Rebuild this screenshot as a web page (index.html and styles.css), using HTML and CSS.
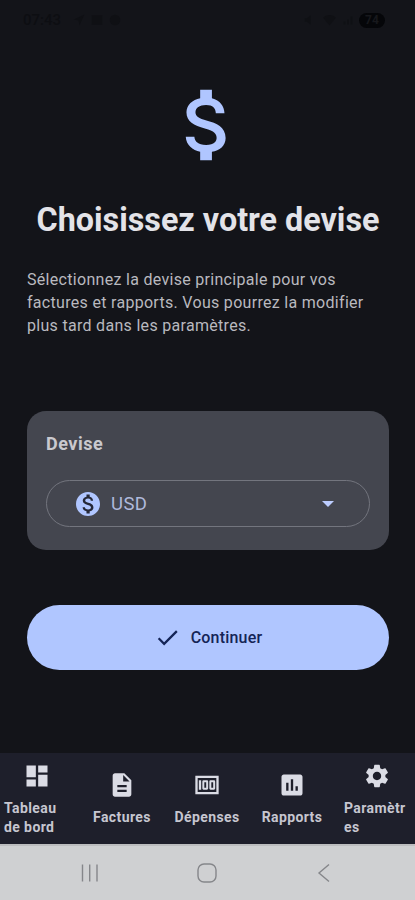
FILE: index.html
```html
<!DOCTYPE html>
<html lang="fr">

<head>
    <meta charset="UTF-8">
    <meta name="viewport" content="width=device-width, initial-scale=1.0">
    <title>Choisissez votre devise</title>
    <link rel="stylesheet" href="styles.css">
</head>

<body>
    <div class="status-bar">
        <div class="status-group">
            <span class="status-time">07:43</span>
            <svg width="14" height="14" viewBox="0 0 24 24"><path d="M3 11l18-8-8 18-2-8z"/></svg>
            <svg width="14" height="14" viewBox="0 0 24 24"><path d="M3 4h18v16H3z"/></svg>
            <svg width="14" height="14" viewBox="0 0 24 24"><circle cx="12" cy="12" r="9"/></svg>
        </div>
        <div class="status-group status-right">
            <svg width="14" height="14" viewBox="0 0 24 24"><path d="M3 9v6h4l6 5V4L7 9z"/></svg>
            <svg width="15" height="14" viewBox="0 0 24 24"><path d="M1 8c6-6 16-6 22 0L12 21z"/></svg>
            <svg width="12" height="14" viewBox="0 0 24 24"><path d="M3 21h4v-6H3zm7 0h4v-10h-4zm7 0h4V5h-4z"/></svg>
            <span class="battery">74</span>
        </div>
    </div>

    <main class="content">
        <svg class="hero-icon" viewBox="0 0 24 24"><path d="M11.8 10.9c-2.27-.59-3-1.2-3-2.15 0-1.09 1.01-1.85 2.7-1.85 1.78 0 2.44.85 2.5 2.1h2.21c-.07-1.72-1.12-3.3-3.21-3.81V3h-3v2.16c-1.94.42-3.5 1.68-3.5 3.61 0 2.31 1.91 3.46 4.7 4.13 2.5.6 3 1.48 3 2.41 0 .69-.49 1.79-2.7 1.79-2.06 0-2.87-.92-2.98-2.1h-2.2c.12 2.19 1.76 3.42 3.68 3.83V21h3v-2.15c1.95-.37 3.5-1.5 3.5-3.55 0-2.84-2.43-3.81-4.7-4.4z"/></svg>
        <h1 class="title">Choisissez votre devise</h1>
        <p class="description">Sélectionnez la devise principale pour vos<br>factures et rapports. Vous pourrez la modifier<br>plus tard dans les paramètres.</p>

        <section class="card">
            <h2 class="card-title">Devise</h2>
            <button type="button" class="select">
                <svg class="coin" viewBox="2 2 20 20"><circle class="coin-back" cx="12" cy="12" r="9"/><path d="M12 2C6.48 2 2 6.48 2 12s4.48 10 10 10 10-4.48 10-10S17.52 2 12 2zm1.41 16.09V20h-2.67v-1.93c-1.71-.36-3.16-1.46-3.27-3.4h1.96c.1 1.05.82 1.87 2.65 1.87 1.96 0 2.4-.98 2.4-1.59 0-.83-.44-1.61-2.67-2.14-2.48-.6-4.18-1.62-4.18-3.67 0-1.72 1.39-2.84 3.11-3.21V4h2.67v1.95c1.86.45 2.79 1.86 2.85 3.39H14.3c-.05-1.11-.64-1.87-2.22-1.87-1.5 0-2.4.68-2.4 1.64 0 .84.65 1.39 2.67 1.91s4.18 1.39 4.18 3.91c-.01 1.83-1.38 2.83-3.12 3.16z"/></svg>
                <span class="select-value">USD</span>
                <svg class="caret" viewBox="0 0 12 6"><path d="M0 0h12L6 6z"/></svg>
            </button>
        </section>

        <button type="button" class="continue">
            <svg class="check" viewBox="0 0 24 24"><path d="M9 16.17L4.83 12l-1.42 1.41L9 19 21 7l-1.41-1.41z"/></svg>
            <span>Continuer</span>
        </button>
    </main>

    <nav class="tabs">
        <a class="tab">
            <svg viewBox="0 0 24 24"><path d="M3 13h8V3H3v10zm0 8h8v-6H3v6zm10 0h8V11h-8v10zm0-18v6h8V3h-8z"/></svg>
            <span>Tableau de bord</span>
        </a>
        <a class="tab">
            <svg viewBox="0 0 24 24"><path d="M14 2H6c-1.1 0-2 .9-2 2v16c0 1.1.89 2 2 2h12c1.1 0 2-.9 2-2V8l-6-6zm2 16H8v-2h8v2zm0-4H8v-2h8v2zm-3-5V3.5L18.5 9H13z"/></svg>
            <span>Factures</span>
        </a>
        <a class="tab">
            <svg viewBox="0 0 24 24"><path fill-rule="evenodd" d="M2 4h20v16H2zM4 6v12h16V6zM5 8h2v8H5zM9 8h3q1 0 1 1v6q0 1-1 1H9q-1 0-1-1V9q0-1 1-1zM9.7 9.7v4.6h1.6V9.7zM15 8h3q1 0 1 1v6q0 1-1 1h-3q-1 0-1-1V9q0-1 1-1zM15.7 9.7v4.6h1.6V9.7z"/></svg>
            <span>Dépenses</span>
        </a>
        <a class="tab">
            <svg viewBox="0 0 24 24"><path d="M19 3H5c-1.1 0-2 .9-2 2v14c0 1.1.9 2 2 2h14c1.1 0 2-.9 2-2V5c0-1.1-.9-2-2-2zM9 17H7v-7h2v7zm4 0h-2V7h2v10zm4 0h-2v-4h2v4z"/></svg>
            <span>Rapports</span>
        </a>
        <a class="tab">
            <svg viewBox="0 0 24 24"><path d="M19.14 12.94c.04-.3.06-.61.06-.94 0-.32-.02-.64-.07-.94l2.03-1.58c.18-.14.23-.41.12-.61l-1.92-3.32c-.12-.22-.37-.29-.59-.22l-2.39.96c-.5-.38-1.03-.7-1.62-.94l-.36-2.54c-.04-.24-.24-.41-.48-.41h-3.84c-.24 0-.43.17-.47.41l-.36 2.54c-.59.24-1.13.57-1.62.94l-2.39-.96c-.22-.08-.47 0-.59.22L2.74 8.87c-.12.21-.08.47.12.61l2.03 1.58c-.05.3-.09.63-.09.94s.02.64.07.94l-2.03 1.58c-.18.14-.23.41-.12.61l1.92 3.32c.12.22.37.29.59.22l2.39-.96c.5.38 1.03.7 1.62.94l.36 2.54c.05.24.24.41.48.41h3.84c.24 0 .44-.17.47-.41l.36-2.54c.59-.24 1.13-.56 1.62-.94l2.39.96c.22.08.47 0 .59-.22l1.92-3.32c.12-.22.07-.47-.12-.61l-2.01-1.58zM12 15.6c-1.98 0-3.6-1.62-3.6-3.6s1.62-3.6 3.6-3.6 3.6 1.62 3.6 3.6-1.62 3.6-3.6 3.6z"/></svg>
            <span>Paramètres</span>
        </a>
    </nav>

    <div class="system-nav">
        <svg viewBox="0 0 20 20"><path d="M2.5 1.5v17M9.7 1.5v17M17 1.5v17"/></svg>
        <svg viewBox="0 0 20 20"><rect x="1" y="1" width="18" height="18" rx="6"/></svg>
        <svg viewBox="0 0 20 20"><path d="M15 1.500L5 10l10 8.500"/></svg>
    </div>
</body>

</html>
```
FILE: styles.css
```css
* {
    box-sizing: border-box;
}

body {
    margin: 0;
    height: 900px;
    display: flex;
    flex-direction: column;
    overflow: hidden;
    background: #131419;
    color: #e3e3e8;
    font-family: Roboto, "Noto Sans", sans-serif;
}

button {
    font-family: inherit;
    margin: 0;
}

.status-bar {
    height: 40px;
    padding: 0 30px 0 23px;
    display: flex;
    justify-content: space-between;
    align-items: center;
    color: #0d0e12;
    fill: #0f1014;
}

.status-group {
    display: flex;
    align-items: center;
    gap: 4px;
}

.status-right {
    gap: 5px;
}

.status-time {
    width: 41px;
    margin-right: 4px;
    font-size: 15px;
    font-weight: 500;
}

.battery {
    width: 26px;
    height: 15px;
    border-radius: 8px;
    background: #050609;
    color: #17181c;
    font-size: 12px;
    font-weight: 700;
    line-height: 15px;
    text-align: center;
}

.content {
    height: 713px;
    padding: 38px 26px 0 27px;
    display: flex;
    flex-direction: column;
}

.hero-icon {
    width: 94px;
    height: 94px;
    align-self: center;
    fill: #b0c6ff;
}

.title {
    margin: 28px 0 0;
    font-size: 32.3px;
    font-weight: 700;
    line-height: 40px;
    text-align: center;
    white-space: nowrap;
}

.description {
    margin: 28px 0 0;
    color: #b9b9bf;
    font-size: 16px;
    line-height: 23px;
    letter-spacing: 0.3px;
    white-space: nowrap;
}

.card {
    height: 139px;
    margin-top: 74px;
    padding: 19px 19px 0;
    border-radius: 19px;
    background: #44464f;
}

.card-title {
    margin: 0 0 23px;
    color: #c9c9ce;
    font-size: 18px;
    font-weight: 700;
    line-height: 27px;
    letter-spacing: 0.5px;
}

.select {
    width: 100%;
    height: 47px;
    padding: 0 35px 0 29px;
    display: flex;
    align-items: center;
    border: 1.5px solid #73757e;
    border-radius: 24px;
    background: none;
    color: #afb9dc;
}

.coin {
    width: 24px;
    height: 24px;
    fill: #b0c6ff;
}

.coin-back {
    fill: #252837;
}

.select-value {
    margin-left: 11px;
    font-size: 18.5px;
    letter-spacing: 0.4px;
}

.caret {
    width: 12px;
    height: 6px;
    margin-left: auto;
    fill: #bdcdff;
}

.continue {
    height: 65px;
    margin-top: 55px;
    padding: 0;
    display: flex;
    justify-content: center;
    align-items: center;
    gap: 10px;
    border: none;
    border-radius: 33px;
    background: #b0c6ff;
    color: #142456;
    font-size: 16px;
    font-weight: 500;
    letter-spacing: 0.2px;
}

.check {
    width: 27px;
    height: 27px;
    fill: #142456;
}

.tabs {
    height: 91px;
    padding: 1px 4px 0 3px;
    display: flex;
    justify-content: space-between;
    align-items: center;
    background: #1e1f2b;
    color: #c6c6d0;
    fill: #dbdce5;
}

.tab {
    width: 68px;
    display: flex;
    flex-direction: column;
    align-items: center;
    font-size: 14px;
    font-weight: 700;
    line-height: 19px;
    letter-spacing: 0.4px;
}

.tab svg {
    width: 28px;
    height: 28px;
    margin-bottom: 9px;
}

.tab span {
    max-width: 66px;
    word-break: break-word;
}

.system-nav {
    flex: 1;
    padding: 0 33px 0 31px;
    display: flex;
    justify-content: space-around;
    align-items: center;
    border-top: 2px solid #bcbdbf;
    background: #cfd0d2;
}

.system-nav svg {
    width: 20px;
    height: 20px;
    fill: none;
    stroke: #85868a;
    stroke-width: 1.4;
}
```
